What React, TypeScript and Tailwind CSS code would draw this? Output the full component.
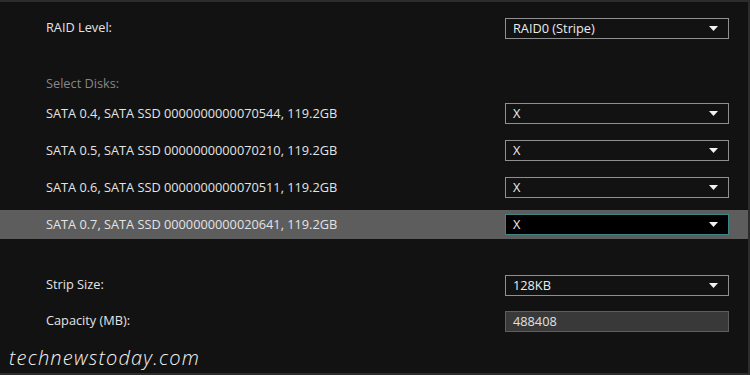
const font = { fontFamily: '"Open Sans", "Noto Sans", sans-serif' };

function Caret() {
  return (
    <svg width="9" height="5" viewBox="0 0 9 5" className="shrink-0">
      <path d="M0 0 H9 L4.5 5 Z" fill="#f2f2f2" />
    </svg>
  );
}

function Select({ value, active = false }: { value: string; active?: boolean }) {
  return (
    <div
      className={`w-[224px] h-[21px] flex items-center justify-between pl-[7px] pr-[10px] border ${
        active ? "bg-black border-[#3f8484]" : "border-[#8f8f8f]"
      }`}
    >
      <span className="text-[12.75px] text-[#ececec] leading-none">{value}</span>
      <Caret />
    </div>
  );
}

function Row({
  label,
  children,
  className = "",
}: {
  label: string;
  children: React.ReactNode;
  className?: string;
}) {
  return (
    <div className={`flex items-center justify-between pl-[46px] pr-[19px] ${className}`}>
      <span className="text-[12.75px] text-[#e4e4e4]">{label}</span>
      {children}
    </div>
  );
}

const disks = [
  "SATA 0.4, SATA SSD 0000000000070544, 119.2GB",
  "SATA 0.5, SATA SSD 0000000000070210, 119.2GB",
  "SATA 0.6, SATA SSD 0000000000070511, 119.2GB",
  "SATA 0.7, SATA SSD 0000000000020641, 119.2GB",
];

export default function App() {
  return (
    <div
      className="relative w-[750px] h-[375px] bg-[#121212] border-t-2 border-r-2 border-b-2 border-[#2c2c2c] overflow-hidden"
      style={font}
    >
      <div className="flex flex-col">
        <Row label="RAID Level:" className="h-[36px] mt-[8px]">
          <Select value="RAID0 (Stripe)" />
        </Row>

        <div className="pl-[46px] h-[24px] mt-[26px] flex items-center">
          <span className="text-[12.75px] text-[#878787]">Select Disks:</span>
        </div>

        <div className="flex flex-col gap-[8px] mt-[3px]">
          {disks.map((d, i) => (
            <Row
              key={d}
              label={d}
              className={`h-[29px] ${i === 3 ? "bg-[#5d5d5d]" : ""}`}
            >
              <Select value="X" active={i === 3} />
            </Row>
          ))}
        </div>

        <Row label="Strip Size:" className="h-[28px] mt-[32px]">
          <Select value="128KB" />
        </Row>

        <Row label="Capacity (MB):" className="h-[28px] mt-[8px]">
          <div className="w-[224px] h-[21px] flex items-center pl-[7px] bg-[#393939] border border-[#5e5e5e]">
            <span className="text-[12.75px] text-[#e0e0e0] leading-none">488408</span>
          </div>
        </Row>
      </div>

      <span className="absolute left-[9px] top-[341px] text-[20px] italic font-light text-[#f4f4f4] tracking-[1.2px]">
        technewstoday.com
      </span>
    </div>
  );
}
